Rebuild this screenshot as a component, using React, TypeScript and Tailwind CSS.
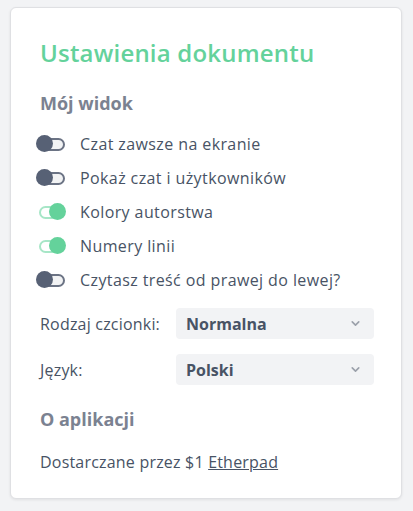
import { ChevronDown } from 'lucide-react'

const VIEW_OPTIONS = [
  { label: 'Czat zawsze na ekranie', on: false },
  { label: 'Pokaż czat i użytkowników', on: false },
  { label: 'Kolory autorstwa', on: true },
  { label: 'Numery linii', on: true },
  { label: 'Czytasz treść od prawej do lewej?', on: false },
]

function Toggle({ on }: { on: boolean }) {
  if (on) {
    return (
      <span className="relative flex h-[18px] w-[30px] shrink-0 items-center">
        <span className="ml-[3px] h-[13px] w-[26px] rounded-full border-2 border-[#a7e6c7] bg-white" />
        <span className="absolute right-0 top-0 h-[17px] w-[17px] rounded-full bg-[#64d29b]" />
      </span>
    )
  }
  return (
    <span className="relative flex h-[18px] w-[30px] shrink-0 items-center">
      <span className="ml-[2px] h-[13px] w-[27px] rounded-full border-2 border-[#6b7384] bg-[#f2f3f4]" />
      <span className="absolute left-0 top-0 h-[17px] w-[17px] rounded-full bg-[#576175]" />
    </span>
  )
}

function Select({ value }: { value: string }) {
  return (
    <div className="flex h-[31px] w-[198px] items-center justify-between rounded-[4px] bg-[#f2f3f5] pl-[10px] pr-[12px]">
      <span className="text-[16px] font-bold text-[#485365]">{value}</span>
      <ChevronDown size={13} strokeWidth={3} className="text-[#9ca1ab]" />
    </div>
  )
}

export default function App() {
  return (
    <div
      className="min-h-[511px] bg-[#f2f3f5] pl-[10px] pr-[11px] pt-[7px]"
      style={{ fontFamily: '"Open Sans", "Noto Sans", sans-serif' }}
    >
      <div className="rounded-[6px] border border-[#dfe0e3] bg-white pb-[24px] pl-[29px] pr-[26px] pt-[27px] shadow-[0_1px_3px_rgba(0,0,0,0.08)]">
        <h1 className="text-[24px] font-semibold leading-[36px] tracking-[0.2px] text-[#64d29b]">Ustawienia dokumentu</h1>

        <h2 className="mt-[18px] text-[18px] font-bold leading-[28px] text-[#7b8291]">Mój widok</h2>

        <div className="mt-[15px] flex flex-col gap-[10px]">
          {VIEW_OPTIONS.map((opt, i) => (
            <div key={i} className="flex h-[24px] items-center gap-[14px]">
              <span className="-ml-[4px]">
                <Toggle on={opt.on} />
              </span>
              <span className="text-[16px] leading-[24px] tracking-[0.4px] text-[#485365]">{opt.label}</span>
            </div>
          ))}
        </div>

        <div className="mt-[16px] flex flex-col gap-[15px]">
          <div className="flex items-center">
            <span className="w-[136px] text-[16px] tracking-[0.2px] text-[#485365]">Rodzaj czcionki:</span>
            <Select value="Normalna" />
          </div>
          <div className="flex items-center">
            <span className="w-[136px] text-[16px] tracking-[0.2px] text-[#485365]">Język:</span>
            <Select value="Polski" />
          </div>
        </div>

        <h2 className="mt-[20px] text-[18px] font-bold leading-[28px] text-[#7b8291]">O aplikacji</h2>

        <p className="mt-[17px] text-[16px] leading-[24px] tracking-[0.2px] text-[#485365]">
          Dostarczane przez $1 <a className="underline">Etherpad</a>
        </p>
      </div>
    </div>
  )
}
